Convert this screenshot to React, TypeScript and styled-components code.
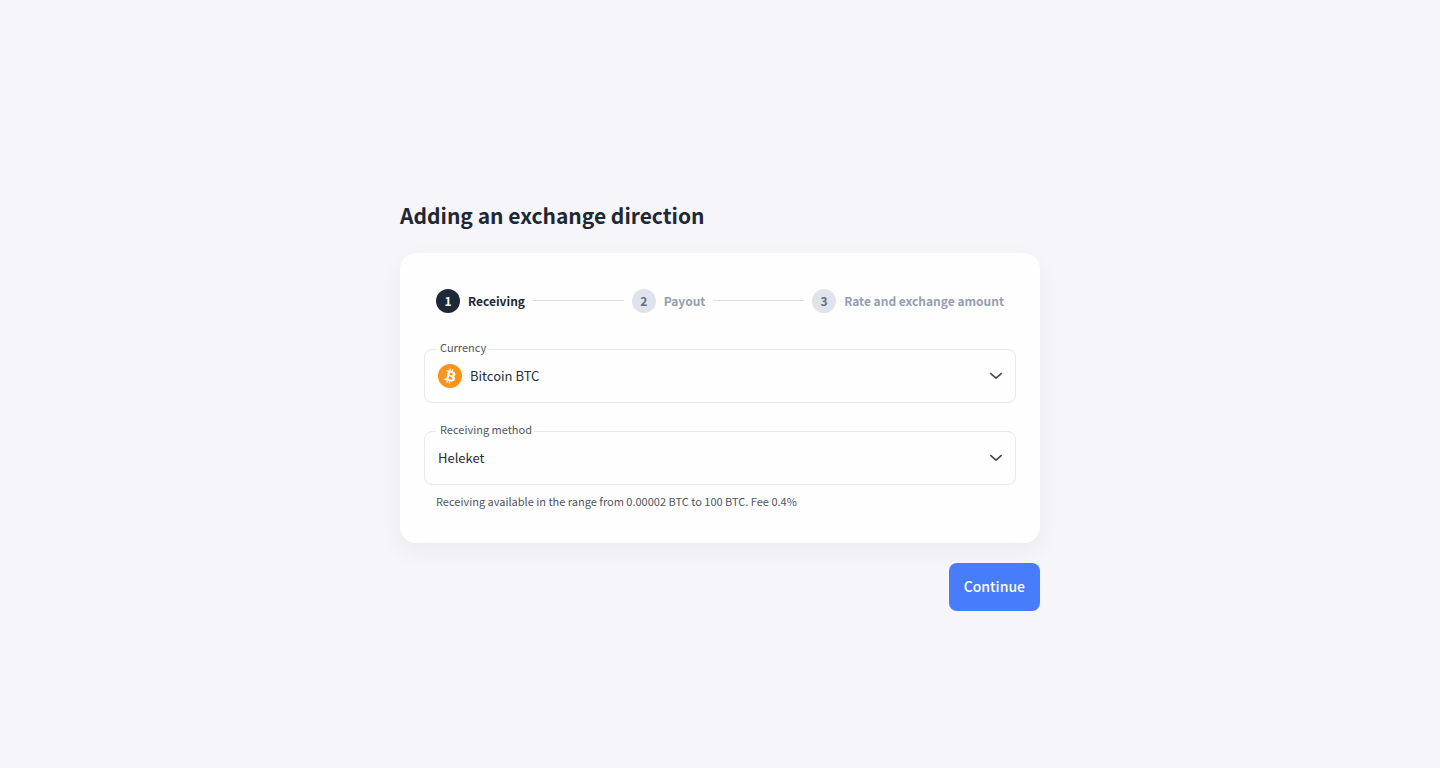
import React, { useState } from "react";
import styled, { createGlobalStyle } from "styled-components";

const GlobalStyle = createGlobalStyle`
  *, *::before, *::after { box-sizing: border-box; }
  body {
    margin: 0;
    background: #f5f5fa;
    color: #1e2734;
    font-family: "Noto Sans CJK SC", "Noto Sans", sans-serif;
    -webkit-font-smoothing: antialiased;
  }
  button, select { font-family: inherit; }
`;

const Page = styled.main`
  min-height: 100vh;
  display: flex;
  align-items: center;
  justify-content: center;
  padding: 44px 16px 0;
`;

const Form = styled.form`
  width: 100%;
  max-width: 640px;
  display: flex;
  flex-direction: column;
  gap: 20px;
`;

const Title = styled.h1`
  margin: 0;
  padding-bottom: 4px;
  font-size: 21px;
  line-height: 28px;
  font-weight: 700;
`;

const Card = styled.section`
  padding: 24px;
  border-radius: 16px;
  background: #fefefe;
  box-shadow: 0 8px 24px rgba(30, 39, 52, 0.05);
`;

const Steps = styled.ol`
  list-style: none;
  margin: 0 0 24px;
  padding: 12px;
  display: flex;
  align-items: center;
  gap: 8px;
`;

const Step = styled.li<{ $active: boolean }>`
  display: flex;
  align-items: center;
  gap: 8px;
  font-size: 12px;
  line-height: 24px;
  font-weight: 700;
  white-space: nowrap;
  color: ${(p) => (p.$active ? "#1e2734" : "#959eb0")};
`;

const StepNumber = styled.span<{ $active: boolean }>`
  width: 24px;
  height: 24px;
  border-radius: 50%;
  text-align: center;
  background: ${(p) => (p.$active ? "#1e2938" : "#e0e3ec")};
  color: ${(p) => (p.$active ? "#ffffff" : "#667085")};
`;

const StepLine = styled.li`
  flex: 1;
  height: 2px;
  border-top: 1px solid #dcdde2;
`;

const Fields = styled.div`
  display: flex;
  flex-direction: column;
  gap: 28px;
`;

const Field = styled.div`
  position: relative;
  height: 54px;
`;

const FieldLabel = styled.label`
  position: absolute;
  top: -11px;
  left: 12px;
  padding: 0 2px 0 4px;
  background: #fefefe;
  font-size: 11px;
  line-height: 18px;
  color: #50555f;
`;

const Select = styled.select<{ $withIcon?: boolean }>`
  appearance: none;
  width: 100%;
  height: 100%;
  padding: 0 40px 0 ${(p) => (p.$withIcon ? 45 : 13)}px;
  border: 1px solid #e8e8ed;
  border-radius: 8px;
  background: transparent;
  font-size: 13px;
  line-height: 20px;
  color: #292c34;
  cursor: pointer;
`;

const CoinSlot = styled.span`
  position: absolute;
  top: 15px;
  left: 14px;
  display: flex;
  pointer-events: none;
`;

const ChevronSlot = styled.span`
  position: absolute;
  top: 19px;
  right: 12px;
  display: flex;
  pointer-events: none;
`;

const Hint = styled.p`
  margin: 0;
  padding: 8px 12px 10px;
  font-size: 11px;
  line-height: 16px;
  color: #50555f;
`;

const ContinueButton = styled.button`
  align-self: flex-end;
  height: 48px;
  padding: 0 15px 2px;
  border: 0;
  border-radius: 8px;
  background: #477cfa;
  color: #ffffff;
  font-size: 14px;
  line-height: 24px;
  font-weight: 500;
  cursor: pointer;
`;

const BitcoinIcon = () => (
  <svg width="24" height="24" viewBox="0 0 32 32" aria-hidden="true">
    <circle cx="16" cy="16" r="16" fill="#f99319" />
    <path
      fill="#ffffff"
      d="M23.189 14.02c.314-2.096-1.283-3.223-3.465-3.975l.708-2.84-1.728-.43-.69 2.765c-.454-.114-.92-.22-1.385-.326l.695-2.783L15.596 6l-.708 2.839c-.376-.086-.746-.17-1.104-.26l.002-.009-2.384-.595-.46 1.846s1.283.294 1.256.312c.7.175.826.638.805 1.006l-.806 3.235c.048.012.11.03.18.057l-.183-.045-1.13 4.532c-.086.212-.303.531-.793.41.018.025-1.256-.313-1.256-.313l-.858 1.978 2.25.561c.418.105.828.215 1.231.318l-.715 2.872 1.727.43.708-2.84c.472.127.93.245 1.378.357l-.706 2.828 1.728.43.715-2.866c2.948.558 5.164.333 6.097-2.333.752-2.146-.037-3.385-1.588-4.192 1.13-.26 1.98-1.003 2.207-2.538zm-3.95 5.538c-.533 2.147-4.148.986-5.32.695l.95-3.805c1.172.293 4.929.872 4.37 3.11zm.535-5.569c-.487 1.953-3.495.96-4.47.717l.86-3.45c.975.243 4.118.696 3.61 2.733z"
    />
  </svg>
);

const Chevron = () => (
  <ChevronSlot>
    <svg width="16" height="16" viewBox="0 0 16 16" fill="none" aria-hidden="true">
      <path
        d="M2.8 5.7 8 10.1l5.2-4.4"
        stroke="#454854"
        strokeWidth="1.7"
        strokeLinecap="round"
        strokeLinejoin="round"
      />
    </svg>
  </ChevronSlot>
);

const steps = ["Receiving", "Payout", "Rate and exchange amount"];

export default function App() {
  const [currency, setCurrency] = useState("btc");
  const [method, setMethod] = useState("heleket");

  return (
    <>
      <GlobalStyle />
      <Page>
        <Form onSubmit={(e) => e.preventDefault()}>
          <Title>Adding an exchange direction</Title>
          <Card>
            <Steps>
              {steps.map((name, i) => (
                <React.Fragment key={name}>
                  {i > 0 && <StepLine aria-hidden="true" />}
                  <Step $active={i === 0} aria-current={i === 0 ? "step" : undefined}>
                    <StepNumber $active={i === 0}>{i + 1}</StepNumber>
                    {name}
                  </Step>
                </React.Fragment>
              ))}
            </Steps>
            <Fields>
              <Field>
                <Select
                  id="currency"
                  $withIcon
                  value={currency}
                  onChange={(e) => setCurrency(e.target.value)}
                >
                  <option value="btc">Bitcoin BTC</option>
                </Select>
                <FieldLabel htmlFor="currency">Currency</FieldLabel>
                <CoinSlot>
                  <BitcoinIcon />
                </CoinSlot>
                <Chevron />
              </Field>
              <Field>
                <Select
                  id="method"
                  aria-describedby="method-hint"
                  value={method}
                  onChange={(e) => setMethod(e.target.value)}
                >
                  <option value="heleket">Heleket</option>
                </Select>
                <FieldLabel htmlFor="method">Receiving method</FieldLabel>
                <Chevron />
              </Field>
            </Fields>
            <Hint id="method-hint">
              Receiving available in the range from 0.00002 BTC to 100 BTC. Fee 0.4%
            </Hint>
          </Card>
          <ContinueButton type="submit">Continue</ContinueButton>
        </Form>
      </Page>
    </>
  );
}
